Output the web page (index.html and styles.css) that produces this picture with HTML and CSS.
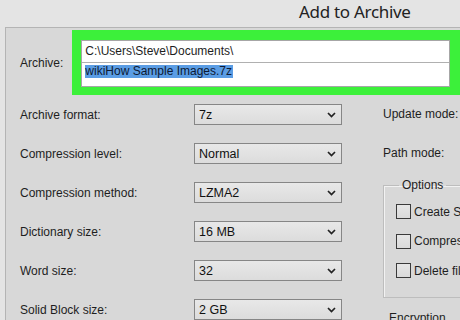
FILE: index.html
```html
<!DOCTYPE html>
<html lang="en">
<head>
    <meta charset="UTF-8">
    <meta name="viewport" content="width=device-width, initial-scale=1.0">
    <title>Add to Archive</title>
    <link rel="stylesheet" href="styles.css">
</head>
<body>
    <header class="titlebar">
        <h1 class="title">Add to Archive</h1>
    </header>

    <div class="dialog">
        <div class="archive-row">
            <span class="archive-label">Archive:</span>
            <div class="highlight-box">
                <div class="path-box">
                    <div class="path-line">C:\Users\Steve\Documents\</div>
                    <div class="path-line path-name"><span class="selected">wikiHow Sample Images.7z</span></div>
                </div>
            </div>
        </div>

        <div class="main">
            <div class="settings">
                <div class="setting">
                    <span class="setting-label">Archive format:</span>
                    <div class="combo"><span>7z</span><svg class="chevron" width="9" height="6" viewBox="0 0 9 6"><polyline points="1,1 4.5,4.5 8,1" /></svg></div>
                </div>
                <div class="setting">
                    <span class="setting-label">Compression level:</span>
                    <div class="combo"><span>Normal</span><svg class="chevron" width="9" height="6" viewBox="0 0 9 6"><polyline points="1,1 4.5,4.5 8,1" /></svg></div>
                </div>
                <div class="setting">
                    <span class="setting-label">Compression method:</span>
                    <div class="combo"><span>LZMA2</span><svg class="chevron" width="9" height="6" viewBox="0 0 9 6"><polyline points="1,1 4.5,4.5 8,1" /></svg></div>
                </div>
                <div class="setting">
                    <span class="setting-label">Dictionary size:</span>
                    <div class="combo"><span>16 MB</span><svg class="chevron" width="9" height="6" viewBox="0 0 9 6"><polyline points="1,1 4.5,4.5 8,1" /></svg></div>
                </div>
                <div class="setting">
                    <span class="setting-label">Word size:</span>
                    <div class="combo"><span>32</span><svg class="chevron" width="9" height="6" viewBox="0 0 9 6"><polyline points="1,1 4.5,4.5 8,1" /></svg></div>
                </div>
                <div class="setting">
                    <span class="setting-label">Solid Block size:</span>
                    <div class="combo"><span>2 GB</span><svg class="chevron" width="9" height="6" viewBox="0 0 9 6"><polyline points="1,1 4.5,4.5 8,1" /></svg></div>
                </div>
            </div>

            <div class="side">
                <div class="side-row">Update mode:</div>
                <div class="side-row">Path mode:</div>
                <fieldset class="options">
                    <legend>Options</legend>
                    <label class="check-row"><span class="checkbox"></span>Create SFX archive</label>
                    <label class="check-row"><span class="checkbox"></span>Compress shared files</label>
                    <label class="check-row"><span class="checkbox"></span>Delete files after compression</label>
                </fieldset>
                <div class="encryption">Encryption</div>
            </div>
        </div>
    </div>
</body>
</html>
```

FILE: styles.css
```css
* {
    margin: 0;
    padding: 0;
    box-sizing: border-box;
}

:root {
    --window-bg: #e4e4e4;
    --panel-bg: #d8d8d8;
    --text: #1e1e1e;
    --green: #3cf03a;
    --select-blue: #5b9de4;
}

body {
    width: 460px;
    height: 320px;
    overflow: hidden;
    background: var(--window-bg);
    font-family: 'Liberation Sans', Arial, sans-serif;
    font-size: 12px;
    color: var(--text);
}

.titlebar {
    height: 27px;
    padding-left: 299px;
}

.title {
    font-family: 'Noto Sans', 'Open Sans', sans-serif;
    font-weight: 400;
    font-size: 17px;
    letter-spacing: -0.3px;
    line-height: 24px;
    color: #222;
}

.dialog {
    margin-left: 5px;
    height: 293px;
    background: var(--panel-bg);
    border-top: 1px solid #b4b4b4;
    border-left: 1px solid #b4b4b4;
}

/* archive path with the green highlight */
.archive-row {
    display: flex;
    align-items: center;
    height: 67px;
    padding-top: 2px;
}

.archive-label {
    width: 68px;
    padding-left: 14px;
}

.highlight-box {
    width: 400px;
    height: 65px;
    background: var(--green);
    padding: 10px 0 8px 9px;
}

.path-box {
    width: 369px;
    height: 47px;
    background: #fff;
    border: 1px solid #a6a6a6;
}

.path-line {
    height: 22px;
    line-height: 21px;
    padding-left: 3px;
    border-bottom: 1px solid #b0b0b0;
}

.path-name {
    border-bottom: none;
    padding-top: 2px;
    line-height: 13px;
}

.selected {
    display: inline-block;
    background: var(--select-blue);
    color: #0d1a33;
    line-height: 13px;
    padding: 0 1px 0 0;
}

/* settings columns */
.main {
    display: flex;
}

.settings {
    flex-shrink: 0;
    width: 377px;
}

.setting {
    display: flex;
    align-items: center;
    height: 39px;
    padding-left: 14px;
}

.setting-label {
    width: 174px;
}

.combo {
    display: flex;
    align-items: center;
    justify-content: space-between;
    width: 148px;
    height: 21px;
    padding: 0 5px 0 4px;
    border: 1px solid #868686;
    background: linear-gradient(#e8e8e8, #dcdcdc);
    color: #111;
    font-size: 12.5px;
}

.chevron {
    fill: none;
    stroke: #222;
    stroke-width: 1.7;
}

.side {
    flex: 1;
    min-width: 0;
    overflow: hidden;
    white-space: nowrap;
}

.side-row {
    height: 39px;
    line-height: 39px;
}

.options {
    margin-top: 5px;
    width: 120px;
    height: 120px;
    border: 1px solid #bdbdbd;
    box-shadow: inset 1px 1px 0 #f2f2f2;
    padding: 5px 0 0 12px;
}

.options legend {
    padding: 0 3px;
    margin-left: 3px;
    line-height: 14px;
}

.check-row {
    display: flex;
    align-items: center;
    gap: 3px;
    height: 29.5px;
}

.checkbox {
    flex-shrink: 0;
    width: 15px;
    height: 15px;
    border: 1px solid #3a3a3a;
    background: linear-gradient(#e6e6e6, #dadada);
}

.encryption {
    margin-top: 13px;
    padding-left: 6px;
}
```
